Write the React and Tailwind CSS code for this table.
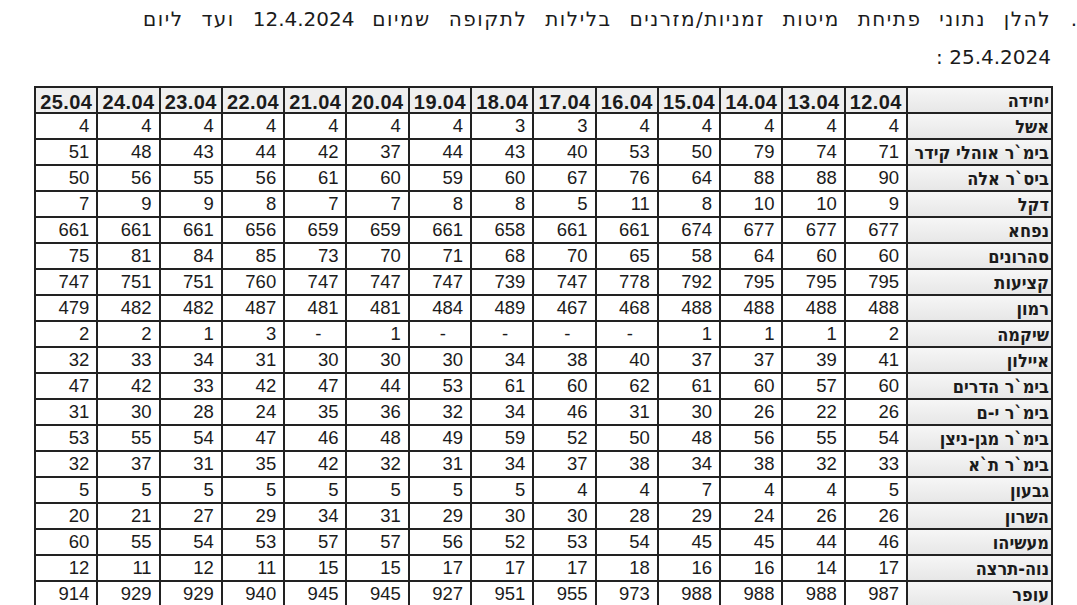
const dates = ['12.04', '13.04', '14.04', '15.04', '16.04', '17.04', '18.04', '19.04', '20.04', '21.04', '22.04', '23.04', '24.04', '25.04']

// values written as they read on screen, 25.04 on the left down to 12.04 on the right
const rows = [
  ['אשל', '4 4 4 4 4 4 4 3 3 4 4 4 4 4'],
  ['בימ`ר אוהלי קידר', '51 48 43 44 42 37 44 43 40 53 50 79 74 71'],
  ['ביס`ר אלה', '50 56 55 56 61 60 59 60 67 76 64 88 88 90'],
  ['דקל', '7 9 9 8 7 7 8 8 5 11 8 10 10 9'],
  ['נפחא', '661 661 661 656 659 659 661 658 661 661 674 677 677 677'],
  ['סהרונים', '75 81 84 85 73 70 71 68 70 65 58 64 60 60'],
  ['קציעות', '747 751 751 760 747 747 747 739 747 778 792 795 795 795'],
  ['רמון', '479 482 482 487 481 481 484 489 467 468 488 488 488 488'],
  ['שיקמה', '2 2 1 3 - 1 - - - - 1 1 1 2'],
  ['איילון', '32 33 34 31 30 30 30 34 38 40 37 37 39 41'],
  ['בימ`ר הדרים', '47 42 33 42 47 44 53 61 60 62 61 60 57 60'],
  ['בימ`ר י-ם', '31 30 28 24 35 36 32 34 46 31 30 26 22 26'],
  ['בימ`ר מגן-ניצן', '53 55 54 47 46 48 49 59 52 50 48 56 55 54'],
  ['בימ`ר ת`א', '32 37 31 35 42 32 31 34 37 38 34 38 32 33'],
  ['גבעון', '5 5 5 5 5 5 5 5 4 4 7 4 4 5'],
  ['השרון', '20 21 27 29 34 31 29 30 30 28 29 24 26 26'],
  ['מעשיהו', '60 55 54 53 57 57 56 52 53 54 45 45 44 46'],
  ['נוה-תרצה', '12 11 12 11 15 15 17 17 17 18 16 16 14 17'],
  ['עופר', '914 929 929 940 945 945 927 951 955 973 988 988 988 987'],
].map(([name, vals]) => ({ name, vals: vals.split(' ').reverse() }))

const nameCell =
  "border-2 border-[#222] bg-linear-to-b from-[#f6f6f6] to-[#e7e7e7] pr-[2px] pt-[1px] text-right text-[18px] font-bold whitespace-nowrap overflow-hidden font-['DejaVu_Sans_Condensed','DejaVu_Sans',sans-serif] font-stretch-condensed"

export default function App() {
  return (
    <div className="w-[1077px] h-[605px] overflow-hidden bg-white text-[#1b1b1b]">
      {/* Paragraph */}
      <div dir="rtl" className="pt-[5px] font-['DejaVu_Sans',sans-serif] text-[20px]">
        <div className="flex leading-[28px]">
          <span className="w-[26px] shrink-0 text-right">.</span>
          <span className="tracking-[1.5px] [word-spacing:10px] whitespace-nowrap">
            להלן נתוני פתיחת מיטות זמניות/מזרנים בלילות לתקופה שמיום <span className="tracking-normal">12.4.2024</span> ועד ליום
          </span>
        </div>
        <div className="mt-[10px] pr-[26px] leading-[28px]">25.4.2024 :</div>
      </div>

      {/* Table */}
      <table
        dir="rtl"
        className="mt-[15px] ml-[34px] w-[1019px] table-fixed border-collapse font-['Liberation_Sans',Arial,sans-serif] text-[18.5px] leading-none"
      >
        <colgroup>
          <col className="w-[145px]" />
          {dates.map((d) => (
            <col key={d} />
          ))}
        </colgroup>
        <thead>
          <tr className="h-[26px]">
            <th className={nameCell}>יחידה</th>
            {dates.map((d) => (
              <th key={d} className="border-2 border-[#222] bg-[#efefef] pt-[3px] text-center text-[20px] font-bold tracking-[0.4px]">
                {d}
              </th>
            ))}
          </tr>
        </thead>
        <tbody>
          {rows.map((row) => (
            <tr key={row.name} className="h-[26px]">
              <td className={nameCell}>{row.name}</td>
              {row.vals.map((v, i) => (
                <td
                  key={i}
                  className={
                    v === '-'
                      ? 'border-2 border-[#222] text-center pl-[6px]'
                      : 'border-2 border-[#222] text-right pr-[7px] pt-[1px]'
                  }
                >
                  {v}
                </td>
              ))}
            </tr>
          ))}
        </tbody>
      </table>
    </div>
  )
}
